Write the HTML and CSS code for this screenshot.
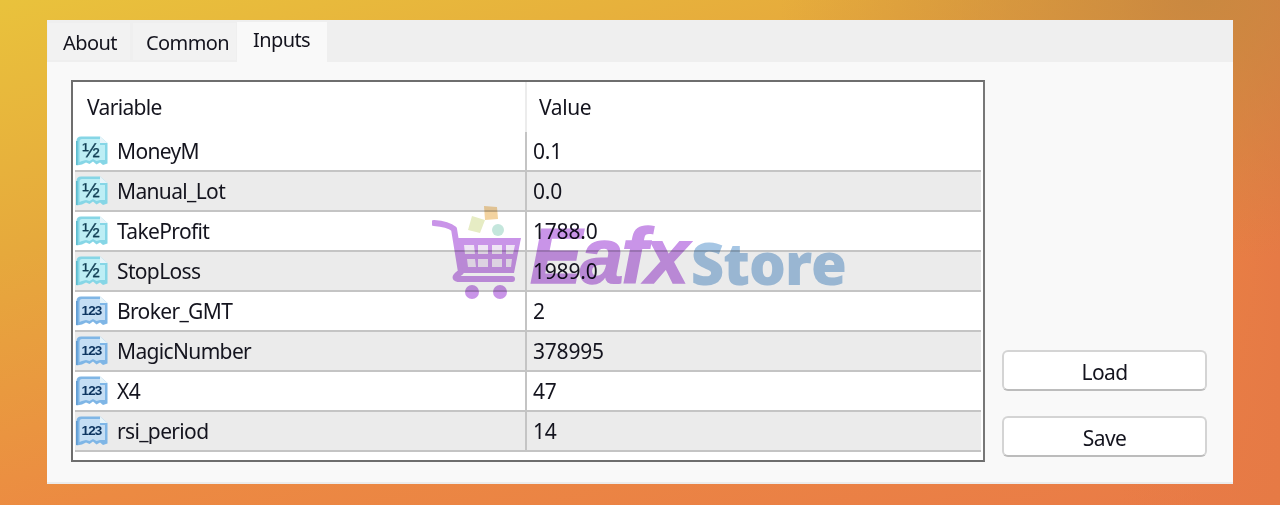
FILE: index.html
```html
<!DOCTYPE html>
<html lang="en">
<head>
<meta charset="utf-8">
<title>Inputs</title>
<link rel="stylesheet" href="styles.css">
</head>
<body>
<svg class="defs" width="0" height="0" aria-hidden="true">
  <defs>
    <symbol id="doc" viewBox="0 0 32 30">
      <path d="M0.5 5Q0.5 0.5 5 0.5H24L31.5 7V27.5L27 29 24 26.5 20.5 28.5 17 25.5 13.5 28 10 26.5 6 28.5 0.5 29.5Z" fill="var(--frame)"/>
      <path d="M3.5 6Q3.5 3 6 3H24V9H29V24L24 24 20.5 25 17 23 13.5 25 10 24 6 25 3.5 26Z" fill="var(--inner)"/>
      <path d="M24 0.5V7H31.5Z" fill="#e8f5fa"/>
      <path d="M0.8 5V29" stroke="var(--edge)" stroke-width="1.2" fill="none"/>
    </symbol>
  </defs>
</svg>
<main class="window">
  <nav class="tabs">
    <span class="tab tab-about">About</span>
    <span class="tab tab-common">Common</span>
    <span class="tab tab-active">Inputs</span>
  </nav>
  <section class="panel">
    <div class="table">
      <div class="row head"><div class="cell name-head">Variable</div><div class="cell value-head">Value</div></div>
      <div class="row"><div class="cell name"><span class="icon dbl"><svg><use href="#doc"/></svg><b>½</b></span>MoneyM</div><div class="cell value">0.1</div></div>
      <div class="row alt"><div class="cell name"><span class="icon dbl"><svg><use href="#doc"/></svg><b>½</b></span>Manual_Lot</div><div class="cell value">0.0</div></div>
      <div class="row"><div class="cell name"><span class="icon dbl"><svg><use href="#doc"/></svg><b>½</b></span>TakeProfit</div><div class="cell value">1788.0</div></div>
      <div class="row alt"><div class="cell name"><span class="icon dbl"><svg><use href="#doc"/></svg><b>½</b></span>StopLoss</div><div class="cell value">1989.0</div></div>
      <div class="row"><div class="cell name"><span class="icon int"><svg><use href="#doc"/></svg><b>123</b></span>Broker_GMT</div><div class="cell value">2</div></div>
      <div class="row alt"><div class="cell name"><span class="icon int"><svg><use href="#doc"/></svg><b>123</b></span>MagicNumber</div><div class="cell value">378995</div></div>
      <div class="row"><div class="cell name"><span class="icon int"><svg><use href="#doc"/></svg><b>123</b></span>X4</div><div class="cell value">47</div></div>
      <div class="row alt"><div class="cell name"><span class="icon int"><svg><use href="#doc"/></svg><b>123</b></span>rsi_period</div><div class="cell value">14</div></div>
    </div>
    <div class="actions">
      <button class="btn" type="button">Load</button>
      <button class="btn" type="button">Save</button>
    </div>
  </section>
  <div class="mark">
    <svg class="cart" width="98" height="100" viewBox="0 0 98 100" aria-hidden="true">
      <path d="M52 2l13 1 1 12-13 1z" fill="#f3d3a0"/>
      <path d="M40 12l13 4-5 13-12-3z" fill="#e6ecc4"/>
      <circle cx="66" cy="26" r="6" fill="#c4e6dc"/>
      <path d="M2 19Q16 20 22 25L29 68Q20 74 26 75H80" fill="none" stroke="#c994e8" stroke-width="6" stroke-linejoin="round" stroke-linecap="round"/>
      <path d="M24 34H89L82 69H31Z" fill="#c994e8"/>
      <path d="M32 41h10l1 9H33zM46 41h10v9H46zM60 41h10v9H60zM74 41h9l-2 9h-7zM35 55h8l1 8h-8zM46 55h10v8H46zM60 55h10v8H60zM74 55h6l-1 8h-5z" fill="#efe4f5"/>
      <circle cx="40" cy="88" r="7" fill="#c994e8"/>
      <circle cx="68" cy="88" r="7" fill="#c994e8"/>
    </svg>
    <span class="mark-eafx">Eafx</span><span class="mark-store">Store</span>
  </div>
</main>
</body>
</html>
```
FILE: styles.css
```css
* { box-sizing: border-box; }
html, body { height: 100%; }
body {
  margin: 0;
  padding: 20px 47px 21px;
  background:
    radial-gradient(420px 260px at 1200px 0, rgba(200,136,64,0.95), rgba(200,136,64,0) 100%),
    linear-gradient(to left, #e67a45 0, rgba(230,122,69,0) 160px),
    linear-gradient(165deg, #e9c23c 0%, #e6a93c 30%, #ec8a42 62%, #e97a47 100%);
  font-family: "Noto Sans", "Liberation Sans", sans-serif;
  color: #14141e;
  overflow: hidden;
}
.defs { position: absolute; }
.window {
  position: relative;
  width: 1186px;
  height: 464px;
  background: #f9f9f9;
  display: flex;
  flex-direction: column;
  border-bottom: 2px solid #ececec;
}
.tabs {
  height: 42px;
  background: #efefef;
  display: flex;
  align-items: flex-end;
  padding-left: 1px;
  flex: none;
}
.tab {
  font-size: 20px;
  line-height: 24px;
  letter-spacing: -0.6px;
  background: #f2f2f2;
}
.tab-about { width: 82px; height: 37px; padding: 8px 0 0 15px; margin-bottom: 2px; }
.tab-common { width: 103px; height: 37px; padding: 8px 0 0 13px; margin-left: 3px; margin-bottom: 2px; }
.tab-active {
  background: #f9f9f9;
  width: 90px;
  height: 40px;
  padding: 6px 0 0 16px;
  margin-left: 1px;
}
.panel {
  flex: 1;
  display: flex;
  padding: 18px 26px 0 24px;
  align-items: flex-start;
}
.table {
  width: 914px;
  height: 382px;
  border: 2px solid #6e6e6e;
  border-right-color: #777;
  background: #fff;
  flex: none;
  padding: 0 2px;
}
.row {
  display: flex;
  height: 40px;
  font-size: 21px;
  letter-spacing: -0.65px;
  line-height: 26px;
  border-bottom: 2px solid #c4c4c4;
}
.row.alt { background: #ebebeb; }
.head {
  height: 50px;
  border-bottom: 0;
}
.cell {
  display: flex;
  align-items: center;
  height: 100%;
}
.name { width: 452px; padding-left: 1px; border-right: 2px solid #c4c4c4; gap: 9px; flex: none; }
.value { flex: 1; padding-left: 6px; letter-spacing: -0.2px; }
.name-head { width: 452px; padding-left: 12px; flex: none; border-right: 2px solid #ececec; }
.value-head { flex: 1; padding-left: 12px; letter-spacing: -0.4px; }
.icon {
  position: relative;
  width: 32px;
  height: 30px;
  flex: none;
  display: flex;
  align-items: center;
  justify-content: center;
}
.icon svg { position: absolute; inset: 0; width: 32px; height: 30px; }
.icon b { position: relative; font-family: "Liberation Sans", sans-serif; line-height: 1; margin-top: -3px; margin-left: -2px; }
.dbl { --frame: #86d6e6; --inner: #bdeef5; --edge: #45b0c4; }
.dbl b { color: #123f55; font-size: 21px; font-weight: 400; letter-spacing: 0; -webkit-text-stroke: 0.3px #123f55; }
.int { --frame: #7fb6e6; --inner: #c5def4; --edge: #4b8cc8; }
.int b { color: #0e3560; font-size: 13.5px; letter-spacing: -0.9px; margin-top: 0; margin-left: -1px; }
.actions {
  margin-left: 17px;
  padding-top: 270px;
  display: flex;
  flex-direction: column;
  gap: 25px;
}
.btn {
  width: 205px;
  height: 41px;
  background: #fff;
  border: 2px solid #d4d4d4;
  border-bottom-color: #bcbcbc;
  border-radius: 6px;
  font: 21px/26px "Noto Sans", "Liberation Sans", sans-serif;
  letter-spacing: -0.6px;
  color: #14141e;
  padding: 2px 0 0;
}
.mark {
  position: absolute;
  left: 385px;
  top: 184px;
  display: flex;
  align-items: flex-end;
  pointer-events: none;
  mix-blend-mode: multiply;
}
.mark .cart { flex: none; }
.mark-eafx {
  font: italic 900 78px/62px "Liberation Sans", sans-serif;
  color: #c994e8;
  margin-bottom: 17px;
  letter-spacing: -2px;
  -webkit-text-stroke: 1.5px #c994e8;
}
.mark-store {
  font: 800 58px/60px "Open Sans", "Liberation Sans", sans-serif;
  color: #a6c6e4;
  margin-left: 4px;
  margin-bottom: 11px;
  letter-spacing: -1px;
}
```
